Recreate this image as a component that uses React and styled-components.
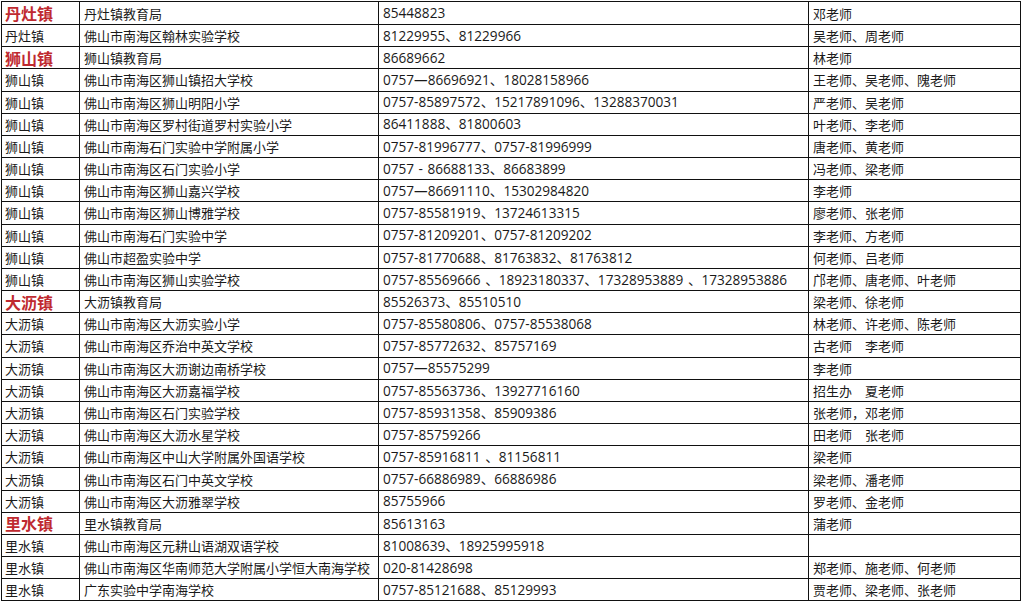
import React from "react";
import styled, { createGlobalStyle } from "styled-components";

const rows = [
  ["丹灶镇", "丹灶镇教育局", "85448823", "邓老师", true],
  ["丹灶镇", "佛山市南海区翰林实验学校", "81229955、81229966", "吴老师、周老师"],
  ["狮山镇", "狮山镇教育局", "86689662", "林老师", true],
  ["狮山镇", "佛山市南海区狮山镇招大学校", "0757—86696921、18028158966", "王老师、吴老师、隗老师"],
  ["狮山镇", "佛山市南海区狮山明阳小学", "0757-85897572、15217891096、13288370031", "严老师、吴老师"],
  ["狮山镇", "佛山市南海区罗村街道罗村实验小学", "86411888、81800603", "叶老师、李老师"],
  ["狮山镇", "佛山市南海石门实验中学附属小学", "0757-81996777、0757-81996999", "唐老师、黄老师"],
  ["狮山镇", "佛山市南海区石门实验小学", "0757 - 86688133、86683899", "冯老师、梁老师"],
  ["狮山镇", "佛山市南海区狮山嘉兴学校", "0757—86691110、15302984820", "李老师"],
  ["狮山镇", "佛山市南海区狮山博雅学校", "0757-85581919、13724613315", "廖老师、张老师"],
  ["狮山镇", "佛山市南海石门实验中学", "0757-81209201、0757-81209202", "李老师、方老师"],
  ["狮山镇", "佛山市超盈实验中学", "0757-81770688、81763832、81763812", "何老师、吕老师"],
  ["狮山镇", "佛山市南海区狮山实验学校", "0757-85569666 、18923180337、17328953889 、17328953886", "邝老师、唐老师、叶老师"],
  ["大沥镇", "大沥镇教育局", "85526373、85510510", "梁老师、徐老师", true],
  ["大沥镇", "佛山市南海区大沥实验小学", "0757-85580806、0757-85538068", "林老师、许老师、陈老师"],
  ["大沥镇", "佛山市南海区乔治中英文学校", "0757-85772632、85757169", "古老师\u3000李老师"],
  ["大沥镇", "佛山市南海区大沥谢边南桥学校", "0757—85575299", "李老师"],
  ["大沥镇", "佛山市南海区大沥嘉福学校", "0757-85563736、13927716160", "招生办\u3000夏老师"],
  ["大沥镇", "佛山市南海区石门实验学校", "0757-85931358、85909386", "张老师，邓老师"],
  ["大沥镇", "佛山市南海区大沥水星学校", "0757-85759266", "田老师\u3000张老师"],
  ["大沥镇", "佛山市南海区中山大学附属外国语学校", "0757-85916811 、81156811", "梁老师"],
  ["大沥镇", "佛山市南海区石门中英文学校", "0757-66886989、66886986", "梁老师、潘老师"],
  ["大沥镇", "佛山市南海区大沥雅翠学校", "85755966", "罗老师、金老师"],
  ["里水镇", "里水镇教育局", "85613163", "蒲老师", true],
  ["里水镇", "佛山市南海区元耕山语湖双语学校", "81008639、18925995918", ""],
  ["里水镇", "佛山市南海区华南师范大学附属小学恒大南海学校", "020-81428698", "郑老师、施老师、何老师"],
  ["里水镇", "广东实验中学南海学校", "0757-85121688、85129993", "贾老师、梁老师、张老师"],
];

const GlobalStyle = createGlobalStyle`
  html, body {
    margin: 0;
    padding: 0;
    background: #ffffff;
  }
  body {
    font-family: "Noto Sans CJK SC", "Noto Sans", sans-serif;
    color: #111;
  }
`;

const Page = styled.div`
  padding: 1px 0 0 1px;
  width: 1024px;
  height: 608px;
  box-sizing: border-box;
  overflow: hidden;
`;

const Table = styled.div`
  display: grid;
  grid-template-columns: 78px 299px 430px 212px;
  grid-template-rows: 23px;
  grid-auto-rows: 22.18px;
  width: max-content;
  border-left: 1px solid #111;
  border-top: 1px solid #111;
`;

const Cell = styled.div`
  box-sizing: border-box;
  border-right: 1px solid #111;
  border-bottom: 1px solid #111;
  padding-left: ${(p) => (p.$town ? "3px" : "4px")};
  display: flex;
  align-items: center;
  white-space: nowrap;
  overflow: hidden;
  font-size: 13px;
  line-height: 1;
  color: #1a1a1a;
`;

const Town = styled(Cell)`
  font-size: ${(p) => (p.$head ? "16px" : "13px")};
  font-weight: ${(p) => (p.$head ? 700 : 400)};
  color: ${(p) => (p.$head ? "#bf2a30" : "#1a1a1a")};
`;

const Phone = styled(Cell)`
  font-family: "Open Sans", "Noto Sans CJK SC", sans-serif;
  font-size: 13.6px;
  word-spacing: 1px;
`;

export default function App() {
  return (
    <Page>
      <GlobalStyle />
      <Table>
        {rows.map(([town, school, phone, contact, head], i) => (
          <React.Fragment key={i}>
            <Town $town $head={head}>{town}</Town>
            <Cell>{school}</Cell>
            <Phone>{phone}</Phone>
            <Cell>{contact}</Cell>
          </React.Fragment>
        ))}
      </Table>
    </Page>
  );
}
